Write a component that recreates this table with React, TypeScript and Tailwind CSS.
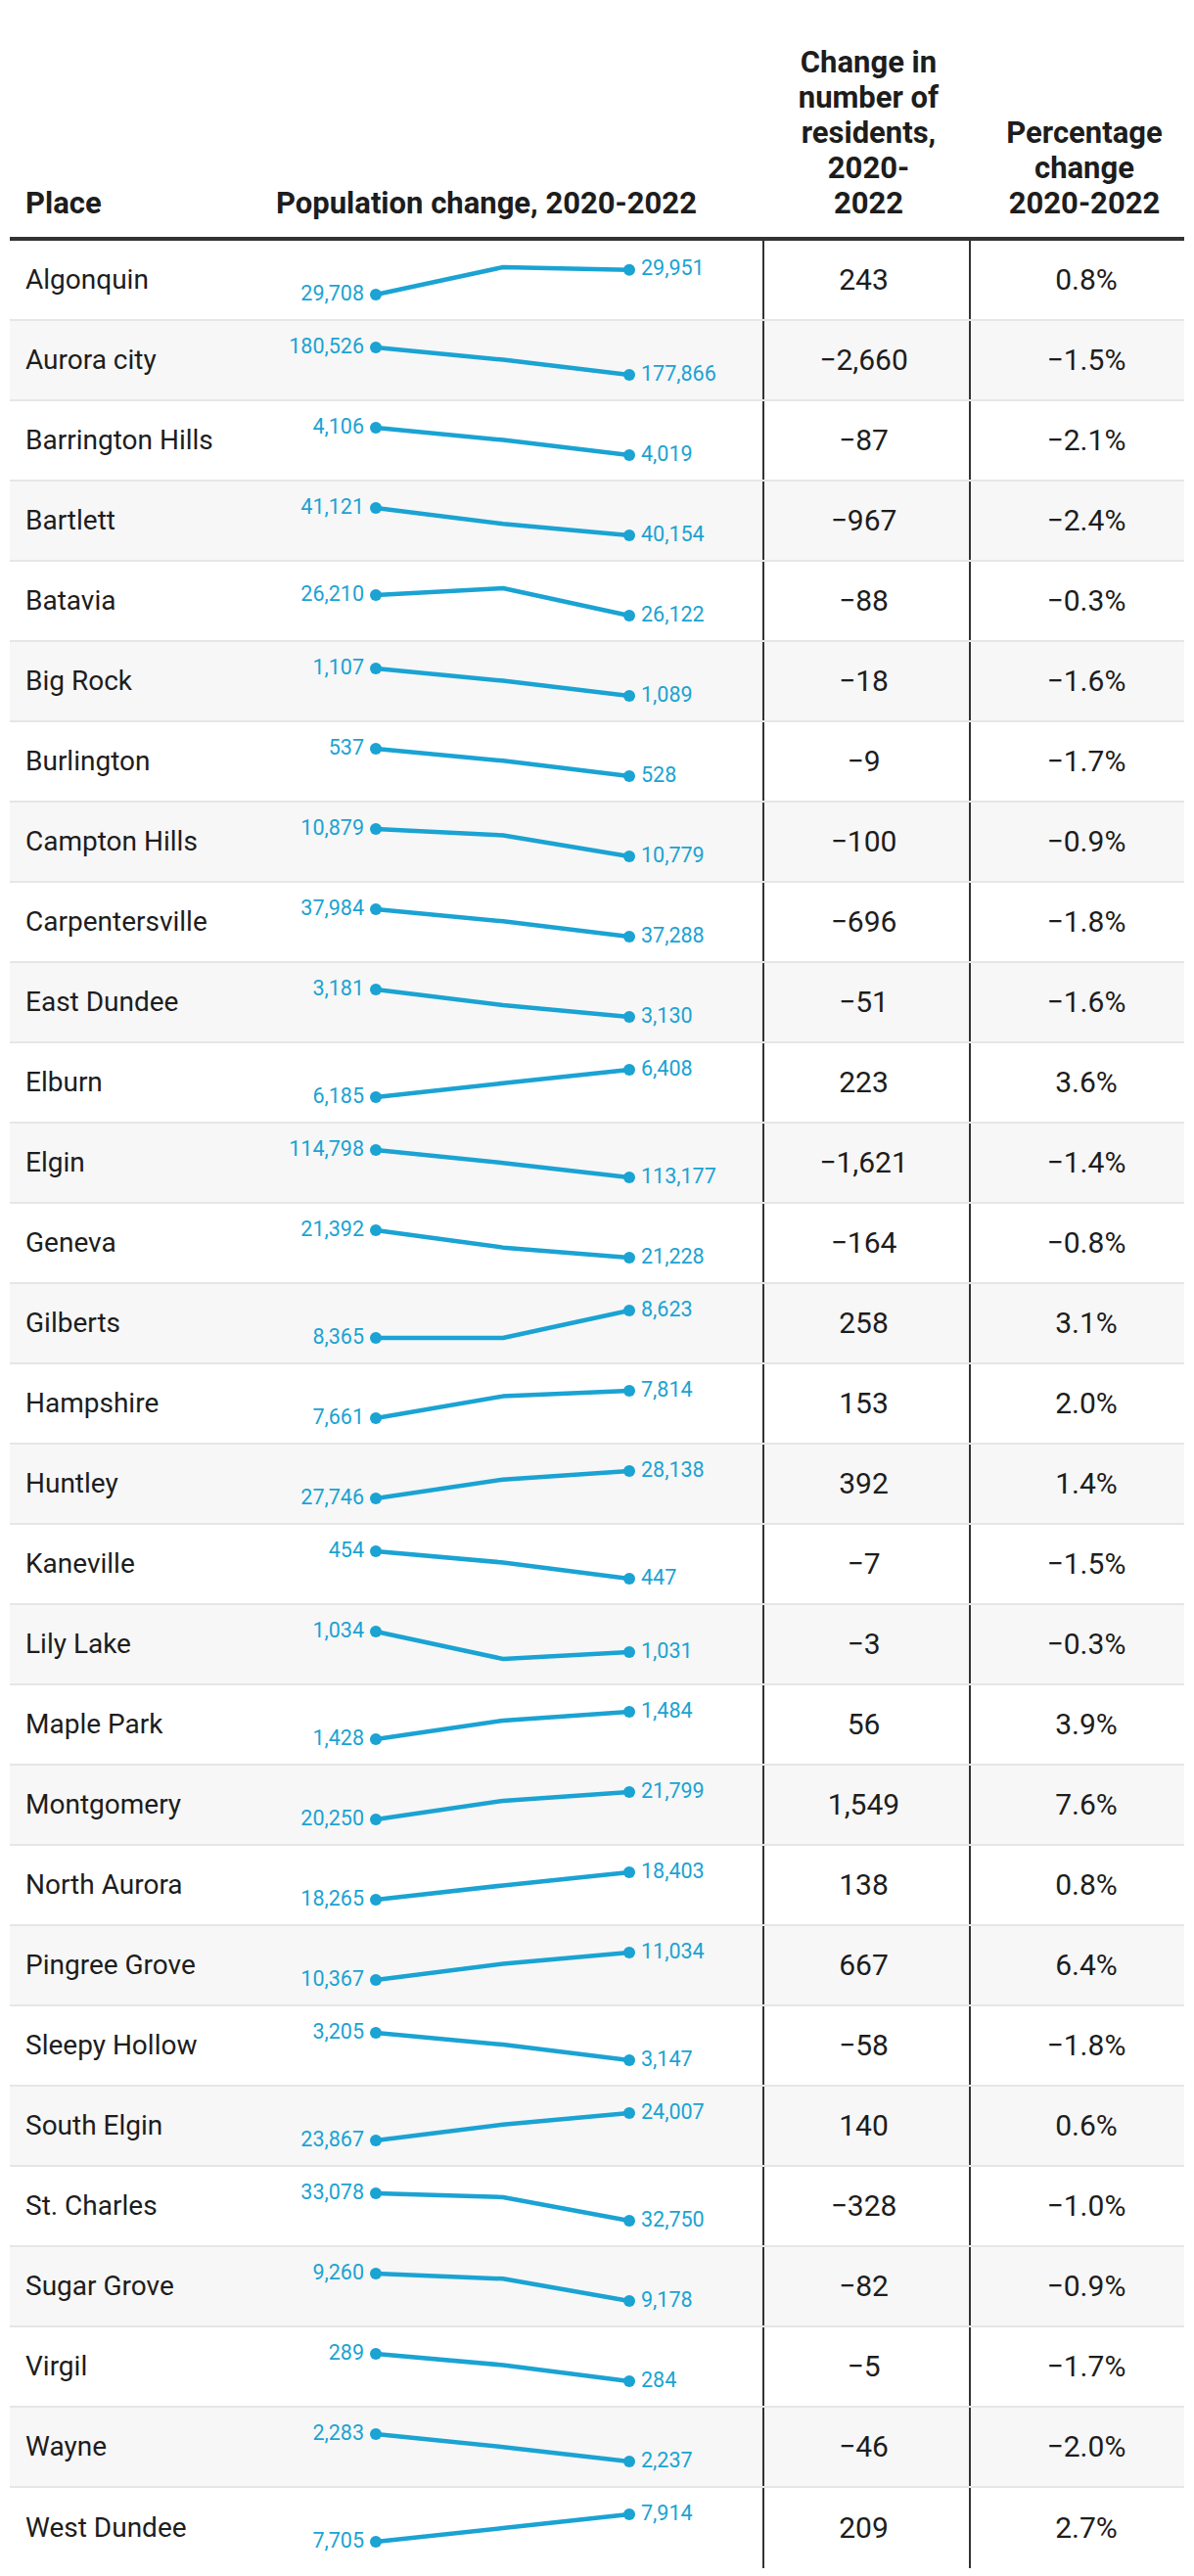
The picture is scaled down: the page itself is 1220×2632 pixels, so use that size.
import React from "react";

type Row = [string, string, string, string, string, [number, number, number]];

const rows: Row[] = [
  ["Algonquin", "29,708", "29,951", "243", "0.8%", [1, 0, 0.095]],
  ["Aurora city", "180,526", "177,866", "\u22122,660", "\u22121.5%", [0, 0.45, 1]],
  ["Barrington Hills", "4,106", "4,019", "\u221287", "\u22122.1%", [0, 0.45, 1]],
  ["Bartlett", "41,121", "40,154", "\u2212967", "\u22122.4%", [0, 0.58, 1]],
  ["Batavia", "26,210", "26,122", "\u221288", "\u22120.3%", [0.25, 0, 1]],
  ["Big Rock", "1,107", "1,089", "\u221218", "\u22121.6%", [0, 0.45, 1]],
  ["Burlington", "537", "528", "\u22129", "\u22121.7%", [0, 0.44, 1]],
  ["Campton Hills", "10,879", "10,779", "\u2212100", "\u22120.9%", [0, 0.23, 1]],
  ["Carpentersville", "37,984", "37,288", "\u2212696", "\u22121.8%", [0, 0.44, 1]],
  ["East Dundee", "3,181", "3,130", "\u221251", "\u22121.6%", [0, 0.57, 1]],
  ["Elburn", "6,185", "6,408", "223", "3.6%", [1, 0.49, 0]],
  ["Elgin", "114,798", "113,177", "\u22121,621", "\u22121.4%", [0, 0.47, 1]],
  ["Geneva", "21,392", "21,228", "\u2212164", "\u22120.8%", [0, 0.63, 1]],
  ["Gilberts", "8,365", "8,623", "258", "3.1%", [1, 1, 0]],
  ["Hampshire", "7,661", "7,814", "153", "2.0%", [1, 0.2, 0]],
  ["Huntley", "27,746", "28,138", "392", "1.4%", [1, 0.31, 0]],
  ["Kaneville", "454", "447", "\u22127", "\u22121.5%", [0, 0.41, 1]],
  ["Lily Lake", "1,034", "1,031", "\u22123", "\u22120.3%", [0, 1, 0.75]],
  ["Maple Park", "1,428", "1,484", "56", "3.9%", [1, 0.32, 0]],
  ["Montgomery", "20,250", "21,799", "1,549", "7.6%", [1, 0.32, 0]],
  ["North Aurora", "18,265", "18,403", "138", "0.8%", [1, 0.48, 0]],
  ["Pingree Grove", "10,367", "11,034", "667", "6.4%", [1, 0.41, 0]],
  ["Sleepy Hollow", "3,205", "3,147", "\u221258", "\u22121.8%", [0, 0.43, 1]],
  ["South Elgin", "23,867", "24,007", "140", "0.6%", [1, 0.42, 0]],
  ["St. Charles", "33,078", "32,750", "\u2212328", "\u22121.0%", [0, 0.14, 1]],
  ["Sugar Grove", "9,260", "9,178", "\u221282", "\u22120.9%", [0, 0.19, 1]],
  ["Virgil", "289", "284", "\u22125", "\u22121.7%", [0, 0.41, 1]],
  ["Wayne", "2,283", "2,237", "\u221246", "\u22122.0%", [0, 0.47, 1]],
  ["West Dundee", "7,705", "7,914", "209", "2.7%", [1, 0.5, 0]],
];

const BLUE = "#1aa3d3";

function Spark({ a, b, p }: { a: string; b: string; p: [number, number, number] }) {
  const xs = [118, 248, 377];
  const ys = p.map((v) => 27 + v * 28);
  const pts = xs.map((x, i) => `${x},${ys[i]}`).join(" ");
  return (
    <svg width="513" height="80" viewBox="0 0 513 80" className="block">
      <polyline points={pts} fill="none" stroke={BLUE} strokeWidth="4.5" strokeLinejoin="round" strokeLinecap="round" />
      <circle cx={xs[0]} cy={ys[0]} r="6" fill={BLUE} />
      <circle cx={xs[2]} cy={ys[2]} r="6" fill={BLUE} />
      <text x="106" y={ys[0] + 5.7} textAnchor="end" fontSize="21.5" fill={BLUE} fontFamily="Roboto, sans-serif">
        {a}
      </text>
      <text x="389" y={ys[2] + 5.7} fontSize="21.5" fill={BLUE} fontFamily="Roboto, sans-serif">
        {b}
      </text>
    </svg>
  );
}

export default function App() {
  return (
    <div className="w-[1220px] bg-white px-[10px] pb-[9px] font-['Roboto',sans-serif] text-[#1d1d1d]">
      <div className="grid h-[246px] grid-cols-[256px_513px_211px_220px] border-b-4 border-[#333333] text-[31px] font-bold leading-[36px]">
        <div className="flex items-end pb-4 pl-4">Place</div>
        <div className="flex items-end pb-4 pl-4">Population change, 2020-2022</div>
        <div className="flex items-end justify-center pb-4 pl-[14px] pr-[8px] text-center">
          <span>
            Change in
            <br />
            number of
            <br />
            residents,
            <br />
            2020-
            <br />
            2022
          </span>
        </div>
        <div className="flex items-end justify-center pb-4 pl-[26px] pr-[10px] text-center">
          <span>
            Percentage
            <br />
            change
            <br />
            2020-2022
          </span>
        </div>
      </div>
      {rows.map(([name, a, b, chg, pct, p], i) => (
        <div
          key={name}
          className={
            "grid h-[82px] grid-cols-[256px_513px_211px_220px] text-[28px] leading-[36px] " +
            (i < rows.length - 1 ? "border-b-2 border-[#e6e6e6] " : "") +
            (i % 2 === 1 ? "bg-[#f7f7f7]" : "bg-white")
          }
        >
          <div className="flex items-center pl-4">{name}</div>
          <div className="flex items-start">
            <Spark a={a} b={b} p={p} />
          </div>
          <div className="flex items-center justify-center border-l-2 border-[#333333] pl-[8px] pr-[14px] text-[30px]">{chg}</div>
          <div className="flex items-center justify-center border-l-2 border-[#333333] pl-[28px] pr-[10px] text-[30px]">{pct}</div>
        </div>
      ))}
    </div>
  );
}
